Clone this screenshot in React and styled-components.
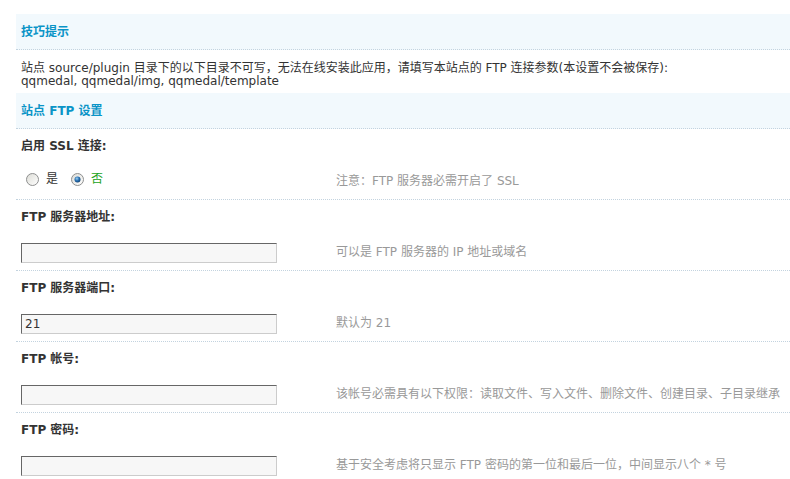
import React from 'react';
import styled, { createGlobalStyle } from 'styled-components';

const GlobalStyle = createGlobalStyle`
  html, body {
    margin: 0;
    padding: 0;
    background: #fff;
  }
  body {
    font: 12px/1.2 "DejaVu Sans", Verdana, "Noto Sans CJK SC", sans-serif;
    color: #333;
  }
`;

const settings = [
  { label: '启用 SSL 连接:', type: 'radio', hint: '注意：FTP 服务器必需开启了 SSL' },
  { label: 'FTP 服务器地址:', type: 'text', value: '', hint: '可以是 FTP 服务器的 IP 地址或域名' },
  { label: 'FTP 服务器端口:', type: 'text', value: '21', hint: '默认为 21' },
  { label: 'FTP 帐号:', type: 'text', value: '', hint: '该帐号必需具有以下权限：读取文件、写入文件、删除文件、创建目录、子目录继承' },
  { label: 'FTP 密码:', type: 'text', value: '', hint: '基于安全考虑将只显示 FTP 密码的第一位和最后一位，中间显示八个 * 号' },
];

const RadioMark = ({ checked }) => (
  <svg width="13" height="13" viewBox="0 0 13 13">
    <defs>
      <linearGradient id={checked ? 'rgOn' : 'rgOff'} x1="0" y1="0" x2="1" y2="1">
        <stop offset="0" stopColor="#dcdcd6" />
        <stop offset="1" stopColor="#ffffff" />
      </linearGradient>
      <radialGradient id="dot" cx="0.4" cy="0.35" r="0.7">
        <stop offset="0" stopColor="#9fd0f0" />
        <stop offset="0.5" stopColor="#2c74b5" />
        <stop offset="1" stopColor="#0e3d6e" />
      </radialGradient>
    </defs>
    <circle cx="6.5" cy="6.5" r="6" fill={`url(#${checked ? 'rgOn' : 'rgOff'})`} stroke="#8e8f8f" strokeWidth="1" />
    {checked && <circle cx="6.5" cy="6.5" r="3" fill="url(#dot)" />}
  </svg>
);

const App = () => (
  <>
    <GlobalStyle />
    <Page>
      <Panel>
        <SectionHead>技巧提示</SectionHead>
        <TipBody>
          站点 source/plugin 目录下的以下目录不可写，无法在线安装此应用，请填写本站点的 FTP 连接参数(本设置不会被保存):
          <br />
          qqmedal, qqmedal/img, qqmedal/template
        </TipBody>
        <SectionHead>站点 FTP 设置</SectionHead>
        {settings.map((item) => (
          <Setting key={item.label}>
            <LabelRow>{item.label}</LabelRow>
            <FieldRow>
              {item.type === 'radio' ? (
                <RadioGroup>
                  <RadioOption>
                    <RadioMark />
                    <span>是</span>
                  </RadioOption>
                  <RadioOption checked>
                    <RadioMark checked />
                    <span>否</span>
                  </RadioOption>
                </RadioGroup>
              ) : (
                <TextInput type="text" defaultValue={item.value} />
              )}
              <Hint>{item.hint}</Hint>
            </FieldRow>
          </Setting>
        ))}
      </Panel>
    </Page>
  </>
);

const Page = styled.div`
  padding: 14px 0 0 16px;
`;

const Panel = styled.div`
  width: 774px;
`;

const SectionHead = styled.div`
  display: flex;
  align-items: center;
  height: 33px;
  padding: 2px 5px 0;
  background: #f2f9fd;
  border-bottom: 1px dotted #c3d3df;
  color: #0a94c7;
  font-weight: 700;
`;

const TipBody = styled.div`
  padding: 12px 5px 2px;
  height: 29px;
  line-height: 13px;
  color: #333;
`;

const Setting = styled.div`
  border-bottom: 1px dotted #c3d3df;
`;

const LabelRow = styled.div`
  display: flex;
  align-items: center;
  height: 35px;
  padding: 0 5px;
  font-weight: 700;
  color: #333;
`;

const FieldRow = styled.div`
  display: grid;
  grid-template-columns: 315px 1fr;
  align-items: center;
  height: 35px;
  padding-left: 5px;
`;

const RadioGroup = styled.div`
  display: flex;
  align-items: center;
  gap: 13px;
  padding: 0 0 4px 5px;
`;

const RadioOption = styled.label`
  display: flex;
  align-items: center;
  gap: 7px;
  color: ${(p) => (p.checked ? '#22a322' : '#333')};
  svg {
    display: block;
  }
`;

const TextInput = styled.input`
  box-sizing: border-box;
  width: 256px;
  height: 20px;
  margin: 0;
  padding: 0 3px;
  border: 1px solid;
  border-color: #666 #ccc #ccc #666;
  background: #f7f7f7;
  font: 12px "DejaVu Sans", Verdana, "Noto Sans CJK SC", sans-serif;
  color: #333;
  outline: none;
`;

const Hint = styled.div`
  color: #999;
  white-space: nowrap;
`;

export default App;
